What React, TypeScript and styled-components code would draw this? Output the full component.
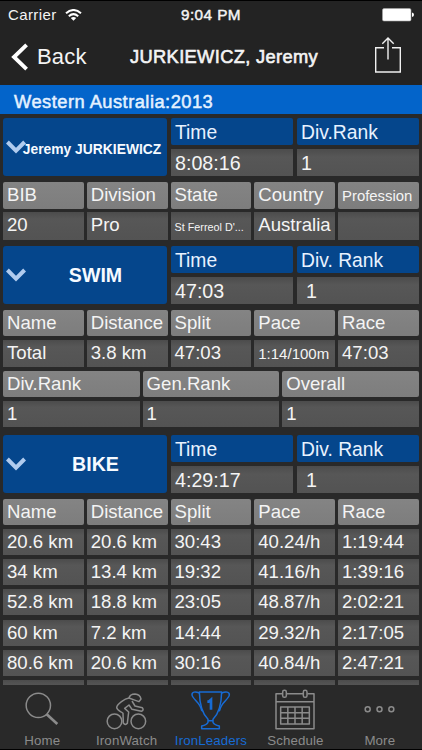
import React from "react";
import styled, { createGlobalStyle } from "styled-components";

const GlobalStyle = createGlobalStyle`
  * { box-sizing: border-box; }
  body { margin: 0; background: #292929; }
`;

const Screen = styled.div`
  display: flex;
  flex-direction: column;
  width: 422px;
  height: 750px;
  overflow: hidden;
  background: #292929;
  color: #f4f4f4;
  font-family: "Liberation Sans", Arial, sans-serif;
  white-space: nowrap;
`;

const Header = styled.header`
  flex: none;
  height: 85px;
  background: #232323;
  border-top: 1px solid #000;
`;

const StatusBar = styled.div`
  display: grid;
  grid-template-columns: 1fr auto 1fr;
  align-items: center;
  height: 27px;
  padding: 0 8px;
  font-size: 15px;
`;

const Carrier = styled.div`
  display: flex;
  align-items: center;
  gap: 8px;
  letter-spacing: 0.4px;
`;

const Clock = styled.div`
  font-size: 15.3px;
  letter-spacing: 0.45px;
  -webkit-text-stroke: 0.45px currentColor;
`;

const Battery = styled.svg`
  justify-self: end;
`;

const NavBar = styled.nav`
  display: grid;
  grid-template-columns: 119px 1fr 48px;
  align-items: center;
  height: 57px;
  padding-left: 11px;
`;

const BackButton = styled.div`
  display: flex;
  align-items: center;
  gap: 8px;
  font-size: 22px;
  letter-spacing: 0.2px;
`;

const Title = styled.h1`
  margin: 0;
  font-size: 18.3px;
  font-weight: 400;
  letter-spacing: 0.35px;
  -webkit-text-stroke: 0.6px currentColor;
`;

const ShareIcon = styled.svg`
  margin-bottom: 3px;
`;

const RaceBar = styled.div`
  flex: none;
  height: 29px;
  padding: 2px 0 0 14px;
  background: #0364ca;
  color: #e4f1ff;
  font-size: 18.3px;
  line-height: 29px;
  letter-spacing: 0.48px;
  -webkit-text-stroke: 0.5px currentColor;
`;

const Results = styled.main`
  flex: 1;
  min-height: 0;
  overflow: hidden;
  display: flex;
  flex-direction: column;
  gap: 8.25px;
  padding: 4px 3px 0;
`;

const Section = styled.section`
  flex: none;
  display: flex;
  flex-direction: column;
  gap: 6px;
`;

const Summary = styled.div`
  display: grid;
  grid-template-columns: 164px 122px 122px;
  grid-template-rows: 27px 27px;
  column-gap: 4px;
  row-gap: 4px;
`;

const Toggle = styled.div<{ $long?: boolean }>`
  grid-row: 1 / 3;
  display: flex;
  align-items: center;
  padding: 0 ${(p) => (p.$long ? 7 : 0)}px 0 3px;
  border-radius: 3px;
  background: #05468c;
  color: #f6faff;
  font-size: ${(p) => (p.$long ? 13.85 : 19.6)}px;
  font-weight: 700;
`;

const ToggleLabel = styled.span<{ $long?: boolean }>`
  flex: 1;
  display: flex;
  justify-content: center;
  min-width: 0;
  margin-left: -2px;
  padding-top: ${(p) => (p.$long ? 3 : 1)}px;
`;

const SummaryHead = styled.div`
  padding-left: 4px;
  border-radius: 2px;
  background: #05468c;
  color: #e8f2ff;
  font-size: 19.3px;
  line-height: 29px;
`;

const SummaryValue = styled.div<{ $indent?: boolean }>`
  padding-left: ${(p) => (p.$indent ? 9 : 4)}px;
  background: linear-gradient(#4c4c4c, #575757 30%, #535353);
  font-size: 19.7px;
  line-height: 29px;
`;

const Table = styled.div`
  display: flex;
  flex-direction: column;
  gap: 4.75px;
`;

const Row = styled.div<{ $columns: number }>`
  display: grid;
  grid-template-columns: repeat(${(p) => p.$columns}, minmax(0, 1fr));
  column-gap: 2.8px;
  height: 25.5px;
`;

const Cell = styled.div<{ $head?: boolean }>`
  padding-left: 4px;
  border-radius: ${(p) => (p.$head ? 2 : 0)}px;
  background: ${(p) =>
    p.$head
      ? "linear-gradient(#848484, #7d7d7d)"
      : "linear-gradient(#4c4c4c, #575757 25%, #535353)"};
  font-size: 18.6px;
  line-height: 26px;
`;

const CellText = styled.span<{ $size: number }>`
  font-size: ${(p) => p.$size}px;
`;

const TabBar = styled.footer`
  flex: none;
  display: grid;
  grid-template-columns: repeat(5, 1fr);
  height: 65px;
  background: #292929;
  border-bottom: 1px solid #000;
`;

const Tab = styled.div<{ $active?: boolean }>`
  display: flex;
  flex-direction: column;
  align-items: center;
  padding-top: 3px;
  color: ${(p) => (p.$active ? "#176bd4" : "#8b8b8b")};
  font-size: 13.3px;
  line-height: 15px;
  letter-spacing: 0.12px;
`;

const TabIcon = styled.svg`
  flex: none;
  width: 50px;
  height: 46px;
  margin-bottom: -1px;
  fill: none;
  stroke: currentColor;
  stroke-width: 4.5;
  stroke-linejoin: round;
`;

type Text = string | { text: string; size: number };

interface Split {
  head: Text[];
  rows: Text[][];
}

interface Leg {
  name: string;
  long?: boolean;
  time: string;
  rankTitle: string;
  tables: Split[];
}

const splitHead = ["Name", "Distance", "Split", "Pace", "Race"];

const legs: Leg[] = [
  {
    name: "Jeremy JURKIEWICZ",
    long: true,
    time: "8:08:16",
    rankTitle: "Div.Rank",
    tables: [
      {
        head: ["BIB", "Division", "State", "Country", { text: "Profession", size: 14.9 }],
        rows: [["20", "Pro", { text: "St Ferreol D'...", size: 10.8 }, "Australia", ""]],
      },
    ],
  },
  {
    name: "SWIM",
    time: "47:03",
    rankTitle: "Div. Rank",
    tables: [
      {
        head: splitHead,
        rows: [["Total", "3.8 km", "47:03", { text: "1:14/100m", size: 15 }, "47:03"]],
      },
      { head: ["Div.Rank", "Gen.Rank", "Overall"], rows: [["1", "1", "1"]] },
    ],
  },
  {
    name: "BIKE",
    time: "4:29:17",
    rankTitle: "Div. Rank",
    tables: [
      {
        head: splitHead,
        rows: [
          ["20.6 km", "20.6 km", "30:43", "40.24/h", "1:19:44"],
          ["34 km", "13.4 km", "19:32", "41.16/h", "1:39:16"],
          ["52.8 km", "18.8 km", "23:05", "48.87/h", "2:02:21"],
          ["60 km", "7.2 km", "14:44", "29.32/h", "2:17:05"],
          ["80.6 km", "20.6 km", "30:16", "40.84/h", "2:47:21"],
          ["", "", "", "", ""],
        ],
      },
    ],
  },
];

function Cells({ items, head }: { items: Text[]; head?: boolean }) {
  return (
    <Row $columns={items.length}>
      {items.map((item, i) => (
        <Cell key={i} $head={head}>
          {typeof item === "string" ? item : <CellText $size={item.size}>{item.text}</CellText>}
        </Cell>
      ))}
    </Row>
  );
}

function LegSection({ leg }: { leg: Leg }) {
  return (
    <Section>
      <Summary>
        <Toggle $long={leg.long}>
          <svg width="20" height="14" viewBox="0 0 20 14" fill="none" stroke="#b0cbee" strokeWidth="4">
            <path d="M1.4 2 L10 10.6 L18.6 2" />
          </svg>
          <ToggleLabel $long={leg.long}>{leg.name}</ToggleLabel>
        </Toggle>
        <SummaryHead>Time</SummaryHead>
        <SummaryHead>{leg.rankTitle}</SummaryHead>
        <SummaryValue>{leg.time}</SummaryValue>
        <SummaryValue $indent={!leg.long}>1</SummaryValue>
      </Summary>
      <Table>
        {leg.tables.map((table, t) => (
          <React.Fragment key={t}>
            <Cells items={table.head} head />
            {table.rows.map((row, i) => (
              <Cells key={i} items={row} />
            ))}
          </React.Fragment>
        ))}
      </Table>
    </Section>
  );
}

export default function App() {
  return (
    <Screen>
      <GlobalStyle />
      <Header>
        <StatusBar>
          <Carrier>
            Carrier
            <svg width="17" height="12" viewBox="0 0 17 12" fill="none" stroke="#fff" strokeWidth="2">
              <path d="M1 4.3 Q8.5 -2.3 16 4.3 M3.8 7.2 Q8.5 3.1 13.2 7.2" />
              <path d="M5.8 9 Q8.5 6.8 11.2 9 L8.5 11.8 Z" fill="#fff" stroke="none" />
            </svg>
          </Carrier>
          <Clock>9:04 PM</Clock>
          <Battery width="32" height="14" viewBox="0 0 32 14">
            <rect x="0.5" y="0.5" width="28.5" height="12.5" rx="1.5" fill="#fff" stroke="#aaa" strokeWidth="0.6" />
            <path d="M30 4.6 Q32 5 32 6.8 Q32 8.6 30 9 Z" fill="#fff" />
          </Battery>
        </StatusBar>
        <NavBar>
          <BackButton>
            <svg width="18" height="28" viewBox="0 0 18 28" fill="none" stroke="#fff" strokeWidth="3.9">
              <path d="M15.6 1.8 L3 14 L15.6 26.2" />
            </svg>
            Back
          </BackButton>
          <Title>JURKIEWICZ, Jeremy</Title>
          <ShareIcon width="28" height="38" viewBox="0 0 28 38" fill="none" stroke="#f0f0f0" strokeWidth="1.4">
            <path d="M10 11.7 H1.7 V36 H26.3 V11.7 H18 M14 23.5 V2.5 M8.3 7.7 L14 2 L19.7 7.7" />
          </ShareIcon>
        </NavBar>
      </Header>
      <RaceBar>Western Australia:2013</RaceBar>
      <Results>
        {legs.map((leg) => (
          <LegSection key={leg.name} leg={leg} />
        ))}
      </Results>
      <TabBar>
        <Tab>
          <TabIcon viewBox="51 54 150 138">
            <circle cx="115" cy="106" r="36.5" />
            <path d="M140 133 L172 162" strokeWidth="8" />
          </TabIcon>
          Home
        </Tab>
        <Tab>
          <TabIcon viewBox="306 54 150 138">
            <circle cx="343.5" cy="154" r="22" />
            <circle cx="415" cy="154" r="22" />
            <path d="M387 84 C374 86 352 101 350 112 C350 122 362 124 369 130 L370 159 Q376 167 382 160 L386 126 L374 115 L387 105 L396 118 L424 124 Q433 120 427 113 L405 108 L396 93" />
            <path d="M387 84 Q390 72 405 72 Q420 73 423 87 L417 95 L406 91 Z" />
          </TabIcon>
          IronWatch
        </Tab>
        <Tab $active>
          <TabIcon viewBox="138 54 150 138">
            <path d="M178 66 H245 C244 110 234 133 219 148 V157 Q222 165 238 168 V176 H185 V168 Q201 165 204 157 V148 C189 133 179 110 178 66 Z M204 152 H219" />
            <path d="M178 69 C166 64 155 65 156 75 C158 88 181 98 185 121 L188 124 M245 69 C257 64 269 65 268 75 C266 88 243 98 239 121 L236 124" />
            <path d="M202 95 H206 L213 89 V119" strokeWidth="8" strokeLinejoin="miter" />
          </TabIcon>
          IronLeaders
        </Tab>
        <Tab>
          <TabIcon viewBox="-6 54 150 138">
            <path d="M32 71 H12 V176 H126 V71 H106 M44 71 H93 M12 95 H126" />
            <rect x="32" y="61" width="11" height="21" rx="5" />
            <rect x="94" y="61" width="11" height="21" rx="5" />
            <path d="M26 111 H112 V162 H26 Z M26 128 H112 M26 145 H112 M47.5 111 V162 M69 111 V162 M90.5 111 V162" />
          </TabIcon>
          Schedule
        </Tab>
        <Tab>
          <TabIcon viewBox="247 54 150 138">
            <circle cx="285" cy="118" r="7.5" />
            <circle cx="320.5" cy="118" r="7.5" />
            <circle cx="356" cy="118" r="7.5" />
          </TabIcon>
          More
        </Tab>
      </TabBar>
    </Screen>
  );
}
